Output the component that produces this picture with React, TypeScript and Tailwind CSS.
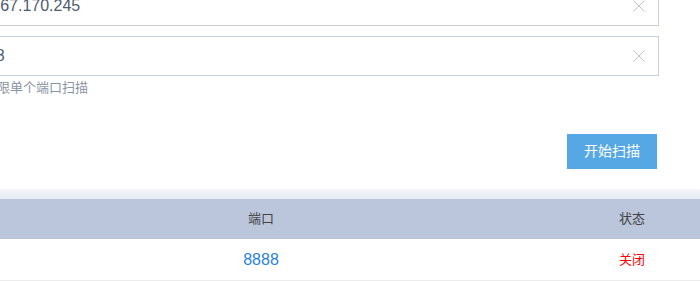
import React from "react";

const ClearIcon = () => (
  <svg width="12" height="12" viewBox="0 0 12 12" className="shrink-0">
    <path d="M0.5 0.5 L11.5 11.5 M11.5 0.5 L0.5 11.5" stroke="#c4c4c4" strokeWidth="1" fill="none" />
  </svg>
);

const Field = ({ value, className = "" }: { value: string; className?: string }) => (
  <div
    className={`h-[40px] border border-[#c8cfdd] bg-white flex items-center justify-between pl-[13px] pr-[13px] ${className}`}
  >
    <span className="text-[16px] text-[#4e5b70]">{value}</span>
    <ClearIcon />
  </div>
);

export default function App() {
  return (
    <div
      className="w-[700px] h-[281px] overflow-hidden bg-white"
      style={{ fontFamily: '"Liberation Sans", "Noto Sans CJK SC", sans-serif' }}
    >
      {/* scan form */}
      <div className="ml-[-45px] mr-[41px] mt-[-14px]">
        <Field value="103.67.170.245" />
        <Field value="8888" className="mt-[10px]" />
        <p className="mt-[3px] ml-[29px] text-[13px] leading-[18px] text-[#8a94a4]">仅限单个端口扫描</p>
        <div className="flex justify-end mt-[37px] mr-[2px]">
          <button className="w-[90px] h-[35px] bg-[#55a8e3] text-white text-[14px]">开始扫描</button>
        </div>
      </div>

      {/* result table */}
      <div className="mt-[20px] h-[10px] bg-gradient-to-b from-[#f4f7fb] to-[#e4ebf4]" />
      <div className="flex h-[40px] bg-[#bbc6dc] items-center text-[13px] text-[#444]">
        <div className="w-[522px] shrink-0 text-center">端口</div>
        <div className="w-[220px] shrink-0 text-center">状态</div>
      </div>
      <div className="flex h-[42px] items-center border-b border-[#ececec]">
        <div className="w-[522px] shrink-0 text-center text-[16px] text-[#2a82dc]">8888</div>
        <div className="w-[220px] shrink-0 text-center text-[13px] text-[#ff0000]">关闭</div>
      </div>
    </div>
  );
}
